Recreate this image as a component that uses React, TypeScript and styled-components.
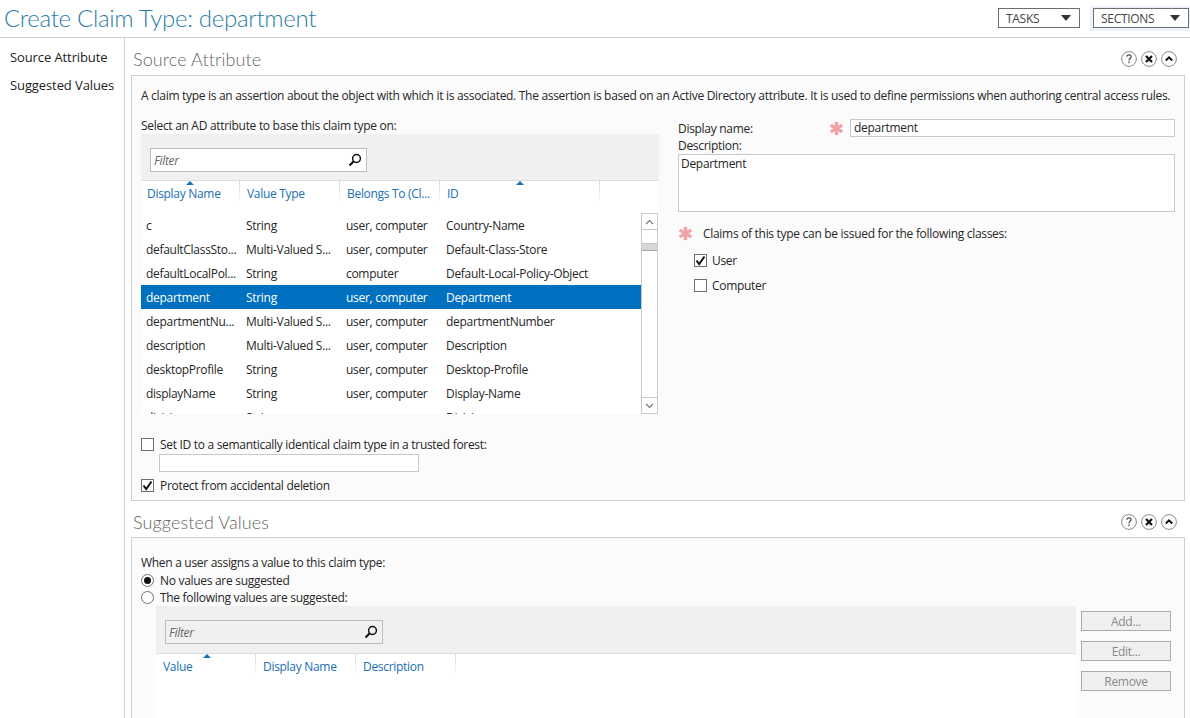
import React from "react";
import styled, { createGlobalStyle } from "styled-components";

const Global = createGlobalStyle`
  html, body { margin: 0; padding: 0; height: 718px; overflow: hidden; background: #fff; }
  body { font-family: "Open Sans", "Noto Sans", sans-serif; font-size: 12px; letter-spacing: -0.3px; color: #262626; }
  * { box-sizing: border-box; }
`;

const Page = styled.div`width: 1190px; height: 718px; display: flex; flex-direction: column; overflow: hidden;`;
const Header = styled.header`
  height: 38px; flex: none; display: flex; align-items: flex-start; justify-content: space-between;
  border-bottom: 1px solid #cfcfcf;
`;
const Title = styled.h1`
  margin: 0; padding: 1px 0 0 4px; font-family: Lato, "Open Sans", sans-serif; font-size: 24px; line-height: 33px; font-weight: 300; color: #2a7ca6; letter-spacing: -0.3px;
`;
const HeaderActions = styled.div`display: flex; align-items: flex-start; padding-top: 6px;`;
const MenuHalo = styled.div<{ $on?: boolean }>`
  padding: 2px 1px 3px 3px; background: ${p => (p.$on ? "#eef3fb" : "transparent")}; margin-left: ${p => (p.$on ? "9px" : "0")};
`;
const MenuButton = styled.div<{ $w: number }>`
  width: ${p => p.$w}px; height: 20px; border: 1px solid #6e6e6e; background: #fff; display: flex; align-items: center;
  justify-content: space-between; padding: 0 8px 0 7px; font-size: 12px; color: #444; letter-spacing: -0.3px;
`;
const Caret = styled.span`
  width: 0; height: 0; border-left: 5px solid transparent; border-right: 5px solid transparent; border-top: 6px solid #333;
`;
const Body = styled.div`flex: 1; display: flex; min-height: 0;`;
const Sidebar = styled.nav`
  width: 125px; flex: none; border-right: 1px solid #cfcfcf; padding: 5px 0 0 10px;
  display: flex; flex-direction: column;
`;
const NavItem = styled.div`height: 28px; line-height: 28px; font-size: 13px; letter-spacing: -0.1px; color: #222; white-space: nowrap;`;
const Main = styled.main`flex: 1; padding: 0 5px 0 6px; min-width: 0; display: flex; flex-direction: column;`;
const SectionHead = styled.div`height: 37px; display: flex; align-items: flex-end; justify-content: space-between; flex: none;`;
const SectionTitle = styled.h2<{ $pb: number }>`
  margin: 0; padding: 0 0 ${p => p.$pb}px 2px; font-family: Lato, "Open Sans", sans-serif; font-size: 18px; line-height: 25px; font-weight: 300; color: #666; letter-spacing: 0.1px;
`;
const PanelIcons = styled.div<{ $pb: number }>`display: flex; gap: 4px; padding: 0 8px ${p => p.$pb}px 0;`;
const Panel = styled.section`
  border: 1px solid #cfcfcf; background: #fbfbfb; padding: 0 9px;
`;
const SourcePanel = styled(Panel)`height: 426px; display: flex; flex-direction: column; flex: none;`;
const ValuesPanel = styled(Panel)`flex: 1; border-bottom: 0; min-height: 0; padding-top: 16px; overflow: hidden;`;
const SecondHead = styled(SectionHead)`height: 36px; `;
const Intro = styled.p`margin: 0; padding-top: 11px; height: 41px; line-height: 17px; white-space: nowrap;`;
const Columns = styled.div`display: flex; flex: 1; min-height: 0;`;
const LeftCol = styled.div`width: 518px; flex: none; display: flex; flex-direction: column;`;
const RightCol = styled.div`width: 497px; margin-left: 19px; flex: none; padding-top: 2px;`;
const Label = styled.div`height: 17px; line-height: 17px; white-space: nowrap;`;
const Bar = styled.div`
  height: 47px; background: #f0f0f0; border-bottom: 1px solid #dcdcdc; padding: 14px 0 0 9px; flex: none;
`;
const ValuesBar = styled(Bar)`display: flex; align-items: flex-start; height: 48px;`;
const FilterBox = styled.div<{ $w: number; $muted?: boolean }>`
  width: ${p => p.$w}px; height: 24px; border: 1px solid #bdbdbd; background: ${p => (p.$muted ? "#f0f0f0" : "#fff")};
  display: flex; align-items: center; justify-content: space-between; padding: 0 4px 0 3px;
  font-style: italic; color: #666;
`;
const GridHead = styled.div`display: flex; height: 24px; background: #fff; flex: none;`;
const HeadCell = styled.div<{ $w?: number; $pad?: number }>`
  position: relative; width: ${p => p.$w ?? 100}px; flex: none; padding: 4px 0 0 ${p => p.$pad ?? 7}px; line-height: 17px; color: #1a6fb5;
  white-space: nowrap; border-right: 1px solid; border-image: linear-gradient(#d6d6d6, #ffffff) 1; height: 22px;
`;
const SortMark = styled.span<{ $x: number }>`
  position: absolute; top: 0; left: ${p => p.$x}px; width: 0; height: 0;
  border-left: 4px solid transparent; border-right: 4px solid transparent; border-bottom: 4px solid #1a6fb5;
`;
const ListArea = styled.div`height: 209px; background: #fff; display: flex; flex: none; overflow: hidden;`;
const Rows = styled.div`width: 500px; flex: none; padding-top: 8px; overflow: hidden;`;
const Row = styled.div<{ $sel?: boolean }>`
  height: 24px; display: grid; grid-template-columns: 100px 100px 100px 1fr; align-items: center; padding-left: 5px;
  background: ${p => (p.$sel ? "#0070c0" : "transparent")}; color: ${p => (p.$sel ? "#fff" : "#262626")};
`;
const Cell = styled.div`white-space: nowrap; overflow: hidden;`;
const Scrollbar = styled.div`
  width: 17px; margin-top: 8px; height: 201px; border: 1px solid #c8c8c8; background: #fff; display: flex; flex-direction: column; position: relative;
`;
const ScrollBtn = styled.div<{ $bottom?: boolean }>`
  height: 16px; flex: none; display: flex; align-items: center; justify-content: center;
  ${p => (p.$bottom ? "border-top: 1px solid #c8c8c8; margin-top: auto;" : "border-bottom: 1px solid #c8c8c8;")}
`;
const Thumb = styled.div`margin-top: 13px; height: 8px; background: #d6d6d6; border-bottom: 1px solid #aaa; border-top: 1px solid #c4c4c4;`;
const CheckRow = styled.div<{ $indent?: number; $gap?: number }>`
  display: flex; align-items: center; gap: ${p => p.$gap ?? 6}px; height: 17px; line-height: 17px; white-space: nowrap; padding-left: ${p => p.$indent ?? 0}px;
`;
const Box = styled.span`
  width: 13px; height: 13px; flex: none; border: 1px solid #707070; background: #fff; display: flex; align-items: center; justify-content: center;
`;
const Radio = styled.span`
  width: 13px; height: 13px; flex: none; border: 1px solid #707070; border-radius: 50%; background: #fff; display: flex; align-items: center; justify-content: center;
`;
const RadioDot = styled.span`width: 7px; height: 7px; border-radius: 50%; background: #111;`;
const SetIdRow = styled(CheckRow)`margin-top: 22px;`;
const TextInput = styled.div<{ $w: number }>`
  width: ${p => p.$w}px; height: 18px; border: 1px solid #c8c8c8; background: #fff; line-height: 16px; padding-left: 3px; color: #262626;
`;
const IndentInput = styled(TextInput)`margin: 1px 0 5px 18px; flex: none;`;
const NameRow = styled.div`display: flex; align-items: center; height: 18px;`;
const NameLabel = styled.div`width: 151px; flex: none;`;
const Star = styled.span`
  width: 21px; flex: none; height: 18px; display: flex; align-items: center;
`;
const TextArea = styled.div`
  height: 58px; border: 1px solid #c8c8c8; background: #fff; padding: 0 2px; line-height: 17px; width: 497px;
`;
const ClaimsRow = styled.div`display: flex; align-items: center; height: 18px; margin-top: 12px; gap: 10px;`;
const ClassList = styled.div`display: flex; flex-direction: column; gap: 8px; margin-top: 10px;`;
const ValuesHead = styled.div`height: 18px; line-height: 17px;`;
const ValuesBody = styled.div`display: flex; margin: 0 0 0 15px; gap: 5px;`;
const ValuesGrid = styled.div`width: 920px; flex: none;`;
const ValuesEmpty = styled.div`height: 200px; background: #fff;`;
const ValuesButtons = styled.div`width: 90px; padding-top: 5px; display: flex; flex-direction: column; gap: 10px;`;
const SideButton = styled.div`
  height: 20px; border: 1px solid #ababab; background: #f0f0f0; color: #8a8a8a; display: flex; align-items: center; justify-content: center;
`;

const StarIcon = () => (
  <svg width="15" height="15" viewBox="0 0 16 16">
    <g stroke="#f0a3a3" strokeWidth="3.6" strokeLinecap="butt">
      <path d="M8 1v14" /><path d="M1.8 4.4l12.4 7.2" /><path d="M14.2 4.4L1.8 11.6" />
    </g>
  </svg>
);
const Search = () => (
  <svg width="14" height="14" viewBox="0 0 14 14" fill="none">
    <circle cx="8.5" cy="5.5" r="3.9" stroke="#111" strokeWidth="1.5" />
    <path d="M5.5 8.5L1.5 12.5" stroke="#111" strokeWidth="2.2" />
  </svg>
);
const Check = () => (
  <svg width="11" height="11" viewBox="0 0 11 11" fill="none">
    <path d="M1.5 5.5L4.2 9L9.5 1.5" stroke="#111" strokeWidth="2" />
  </svg>
);
const Chevron = ({ up }: { up?: boolean }) => (
  <svg width="9" height="6" viewBox="0 0 9 6" fill="none">
    <path d={up ? "M1 5l3.5-3.5L8 5" : "M1 1l3.5 3.5L8 1"} stroke="#777" strokeWidth="1.2" />
  </svg>
);
const PanelIcon = ({ kind }: { kind: "help" | "close" | "up" }) => (
  <svg width="16" height="16" viewBox="0 0 16 16" fill="none">
    <circle cx="8" cy="8" r="7.4" stroke="#8a8a8a" fill="#fff" />
    {kind === "help" && <path d="M5.8 5.6C6 3.4 10 3.4 10.2 5.6C10.2 7.4 8 7.2 8 9.4M8 10.6v1.6" stroke="#444" strokeWidth="1.2" />}
    {kind === "close" && <path d="M5 5l6 6M11 5l-6 6" stroke="#111" strokeWidth="2.2" />}
    {kind === "up" && <path d="M4.8 9.5L8 6.4l3.2 3.1" stroke="#111" strokeWidth="2" />}
  </svg>
);
const Icons = ({ pb }: { pb: number }) => (
  <PanelIcons $pb={pb}>
    <PanelIcon kind="help" /><PanelIcon kind="close" /><PanelIcon kind="up" />
  </PanelIcons>
);

const rows = [
  ["c", "String", "user, computer", "Country-Name"],
  ["defaultClassSto...", "Multi-Valued S...", "user, computer", "Default-Class-Store"],
  ["defaultLocalPol...", "String", "computer", "Default-Local-Policy-Object"],
  ["department", "String", "user, computer", "Department"],
  ["departmentNu...", "Multi-Valued S...", "user, computer", "departmentNumber"],
  ["description", "Multi-Valued S...", "user, computer", "Description"],
  ["desktopProfile", "String", "user, computer", "Desktop-Profile"],
  ["displayName", "String", "user, computer", "Display-Name"],
  ["division", "String", "user", "Division"],
];

export default function App() {
  return (
    <Page>
      <Global />
      <Header>
        <Title>Create Claim Type: department</Title>
        <HeaderActions>
          <MenuHalo><MenuButton $w={82}>TASKS<Caret /></MenuButton></MenuHalo>
          <MenuHalo $on><MenuButton $w={96}>SECTIONS<Caret /></MenuButton></MenuHalo>
        </HeaderActions>
      </Header>
      <Body>
        <Sidebar>
          <NavItem>Source Attribute</NavItem>
          <NavItem>Suggested Values</NavItem>
        </Sidebar>
        <Main>
          <SectionHead><SectionTitle $pb={3}>Source Attribute</SectionTitle><Icons pb={8} /></SectionHead>
          <SourcePanel>
            <Intro>A claim type is an assertion about the object with which it is associated. The assertion is based on an Active Directory attribute. It is used to define permissions when authoring central access rules.</Intro>
            <Columns>
              <LeftCol>
                <Label>Select an AD attribute to base this claim type on:</Label>
                <Bar>
                  <FilterBox $w={217}>Filter<Search /></FilterBox>
                </Bar>
                <GridHead>
                  <HeadCell $w={99} $pad={6}>Display Name<SortMark $x={45} /></HeadCell>
                  <HeadCell>Value Type</HeadCell>
                  <HeadCell>Belongs To (Cl...</HeadCell>
                  <HeadCell $w={160}>ID<SortMark $x={76} /></HeadCell>
                </GridHead>
                <ListArea>
                  <Rows>
                    {rows.map(r => (
                      <Row key={r[0]} $sel={r[0] === "department"}>
                        {r.map((c, i) => <Cell key={i}>{c}</Cell>)}
                      </Row>
                    ))}
                  </Rows>
                  <Scrollbar>
                    <ScrollBtn><Chevron up /></ScrollBtn>
                    <Thumb />
                    <ScrollBtn $bottom><Chevron /></ScrollBtn>
                  </Scrollbar>
                </ListArea>
                <SetIdRow><Box />Set ID to a semantically identical claim type in a trusted forest:</SetIdRow>
                <IndentInput $w={260} />
                <CheckRow><Box><Check /></Box>Protect from accidental deletion</CheckRow>
              </LeftCol>
              <RightCol>
                <NameRow>
                  <NameLabel>Display name:</NameLabel>
                  <Star><StarIcon /></Star>
                  <TextInput $w={325}>department</TextInput>
                </NameRow>
                <Label>Description:</Label>
                <TextArea>Department</TextArea>
                <ClaimsRow><StarIcon />Claims of this type can be issued for the following classes:</ClaimsRow>
                <ClassList>
                  <CheckRow $indent={16} $gap={5}><Box><Check /></Box>User</CheckRow>
                  <CheckRow $indent={16} $gap={5}><Box />Computer</CheckRow>
                </ClassList>
              </RightCol>
            </Columns>
          </SourcePanel>
          <SecondHead><SectionTitle $pb={2}>Suggested Values</SectionTitle><Icons pb={7} /></SecondHead>
          <ValuesPanel>
            <ValuesHead>When a user assigns a value to this claim type:</ValuesHead>
            <CheckRow><Radio><RadioDot /></Radio>No values are suggested</CheckRow>
            <CheckRow><Radio />The following values are suggested:</CheckRow>
            <ValuesBody>
              <ValuesGrid>
                <ValuesBar>
                  <FilterBox $w={218} $muted>Filter<Search /></FilterBox>
                </ValuesBar>
                <GridHead>
                  <HeadCell>Value<SortMark $x={47} /></HeadCell>
                  <HeadCell>Display Name</HeadCell>
                  <HeadCell>Description</HeadCell>
                </GridHead>
                <ValuesEmpty />
              </ValuesGrid>
              <ValuesButtons>
                <SideButton>Add...</SideButton>
                <SideButton>Edit...</SideButton>
                <SideButton>Remove</SideButton>
              </ValuesButtons>
            </ValuesBody>
          </ValuesPanel>
        </Main>
      </Body>
    </Page>
  );
}
